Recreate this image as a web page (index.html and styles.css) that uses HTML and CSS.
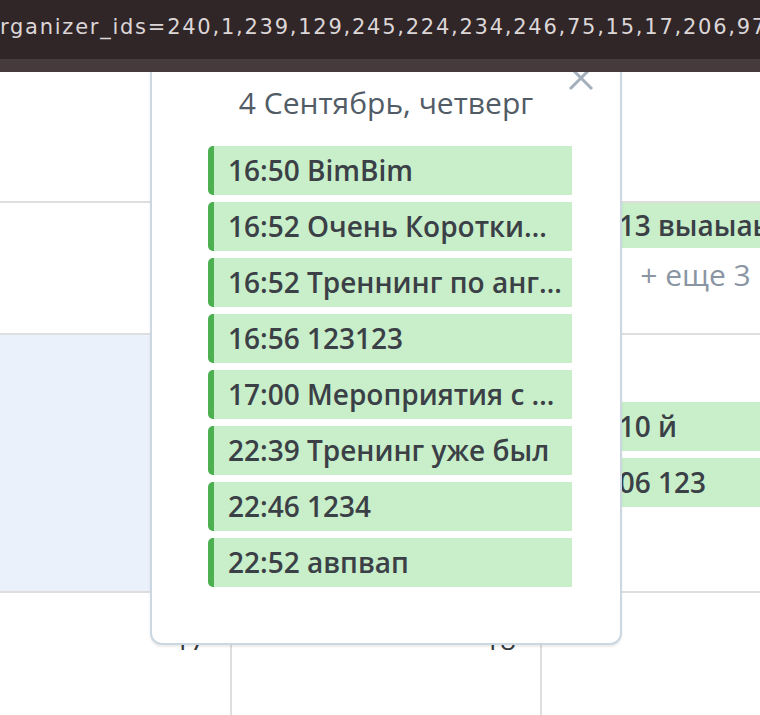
FILE: index.html
```html
<!DOCTYPE html>
<html lang="ru">
<head>
<meta charset="utf-8">
<title>Календарь</title>
<link rel="stylesheet" href="styles.css">
</head>
<body>
<header class="topbar">
  <div class="url">rganizer_ids=240,1,239,129,245,224,234,246,75,15,17,206,97</div>
  <div class="strip"></div>
</header>
<main class="stage">
  <div class="cal">
    <div class="cell"></div>
    <div class="cell"></div>
    <div class="cell"></div>

    <div class="cell"></div>
    <div class="cell"></div>
    <div class="cell cell-events">
      <div class="ev ev-top">17:13 выаыаыв</div>
      <div class="more">+ еще 3</div>
    </div>

    <div class="cell today"></div>
    <div class="cell"></div>
    <div class="cell cell-events">
      <div class="ev ev-gap">22:10 й</div>
      <div class="ev">22:06 123</div>
    </div>

    <div class="cell"><div class="daynum">17</div></div>
    <div class="cell"><div class="daynum">18</div></div>
    <div class="cell"><div class="daynum">19</div></div>
  </div>

  <div class="popover">
    <button class="close" aria-label="Закрыть">
      <svg width="26" height="26" viewBox="0 0 26 26"><path d="M2 2 L24 24 M24 2 L2 24" stroke="#a3afbb" stroke-width="3" fill="none"/></svg>
    </button>
    <div class="pop-title">4 Сентябрь, четверг</div>
    <div class="pop-list">
      <div class="ev">16:50 BimBim</div>
      <div class="ev">16:52 Очень Короткий тренинг</div>
      <div class="ev">16:52 Треннинг по английскому</div>
      <div class="ev">16:56 123123</div>
      <div class="ev">17:00 Мероприятия с длинным названием</div>
      <div class="ev">22:39 Тренинг уже был</div>
      <div class="ev">22:46 1234</div>
      <div class="ev">22:52 авпвап</div>
    </div>
  </div>
</main>
</body>
</html>
```

FILE: styles.css
```css
html, body {
  margin: 0;
  padding: 0;
  width: 760px;
  height: 715px;
  overflow: hidden;
  background: #ffffff;
  font-family: "Open Sans", "Noto Sans", sans-serif;
}

.topbar {
  position: relative;
  z-index: 5;
  background: #302628;
}

.url {
  height: 59px;
  box-sizing: border-box;
  padding-top: 12px;
  font-family: "DejaVu Sans", "Noto Sans", sans-serif;
  font-size: 21px;
  letter-spacing: 1.75px;
  line-height: 30px;
  color: #dcd6d7;
  white-space: nowrap;
  overflow: hidden;
}

.strip {
  height: 13px;
  background: #463a3c;
}

.stage {
  position: relative;
  height: 643px;
  overflow: hidden;
}

.cal {
  display: grid;
  grid-template-columns: 310px 310px 310px;
  grid-template-rows: 131px 132px 258px 200px;
  margin-left: -78px;
  width: 930px;
}

.cell {
  border-right: 2px solid #dedede;
  border-bottom: 2px solid #dedede;
  box-sizing: border-box;
  min-width: 0;
  overflow: hidden;
}

.today {
  background: #eaf1fb;
}

.daynum {
  text-align: right;
  padding: 27px 24px 0 0;
  font-size: 28px;
  line-height: 38px;
  color: #343a40;
}

.cell-events {
  display: flex;
  flex-direction: column;
  padding-left: 17px;
}

.ev {
  height: 49px;
  box-sizing: border-box;
  background: #c8efc9;
  border-left: 6px solid #4cb050;
  border-radius: 5px 0 0 5px;
  padding: 0 8px 0 14px;
  font-size: 28px;
  font-weight: 600;
  line-height: 49px;
  color: #3b4047;
  white-space: nowrap;
  overflow: hidden;
  text-overflow: ellipsis;
}

.cell-events .ev {
  margin-bottom: 7px;
  text-overflow: clip;
}

.ev-top {
  height: 45px;
  line-height: 45px;
}

.ev-gap {
  margin-top: 67px;
}

.more {
  margin-top: 0;
  padding-right: 18px;
  text-align: center;
  font-size: 30px;
  line-height: 40px;
  color: #8995a2;
}

.popover {
  position: absolute;
  z-index: 3;
  left: 150px;
  top: -32px;
  width: 472px;
  height: 605px;
  box-sizing: border-box;
  background: #ffffff;
  border: 2px solid #cbd8e2;
  border-radius: 12px;
  box-shadow: 0 2px 2px rgba(0, 0, 0, 0.08);
  padding: 41px 48px 0 56px;
}

.close {
  position: absolute;
  top: 23px;
  right: 26px;
  padding: 0;
  margin: 0;
  border: 0;
  background: none;
  width: 26px;
  height: 26px;
  display: block;
}

.close svg {
  display: block;
}

.pop-title {
  margin-left: -8px;
  text-align: center;
  font-size: 30px;
  line-height: 40px;
  color: #525c66;
}

.pop-list {
  margin-top: 23px;
  display: flex;
  flex-direction: column;
  gap: 7px;
}
```
